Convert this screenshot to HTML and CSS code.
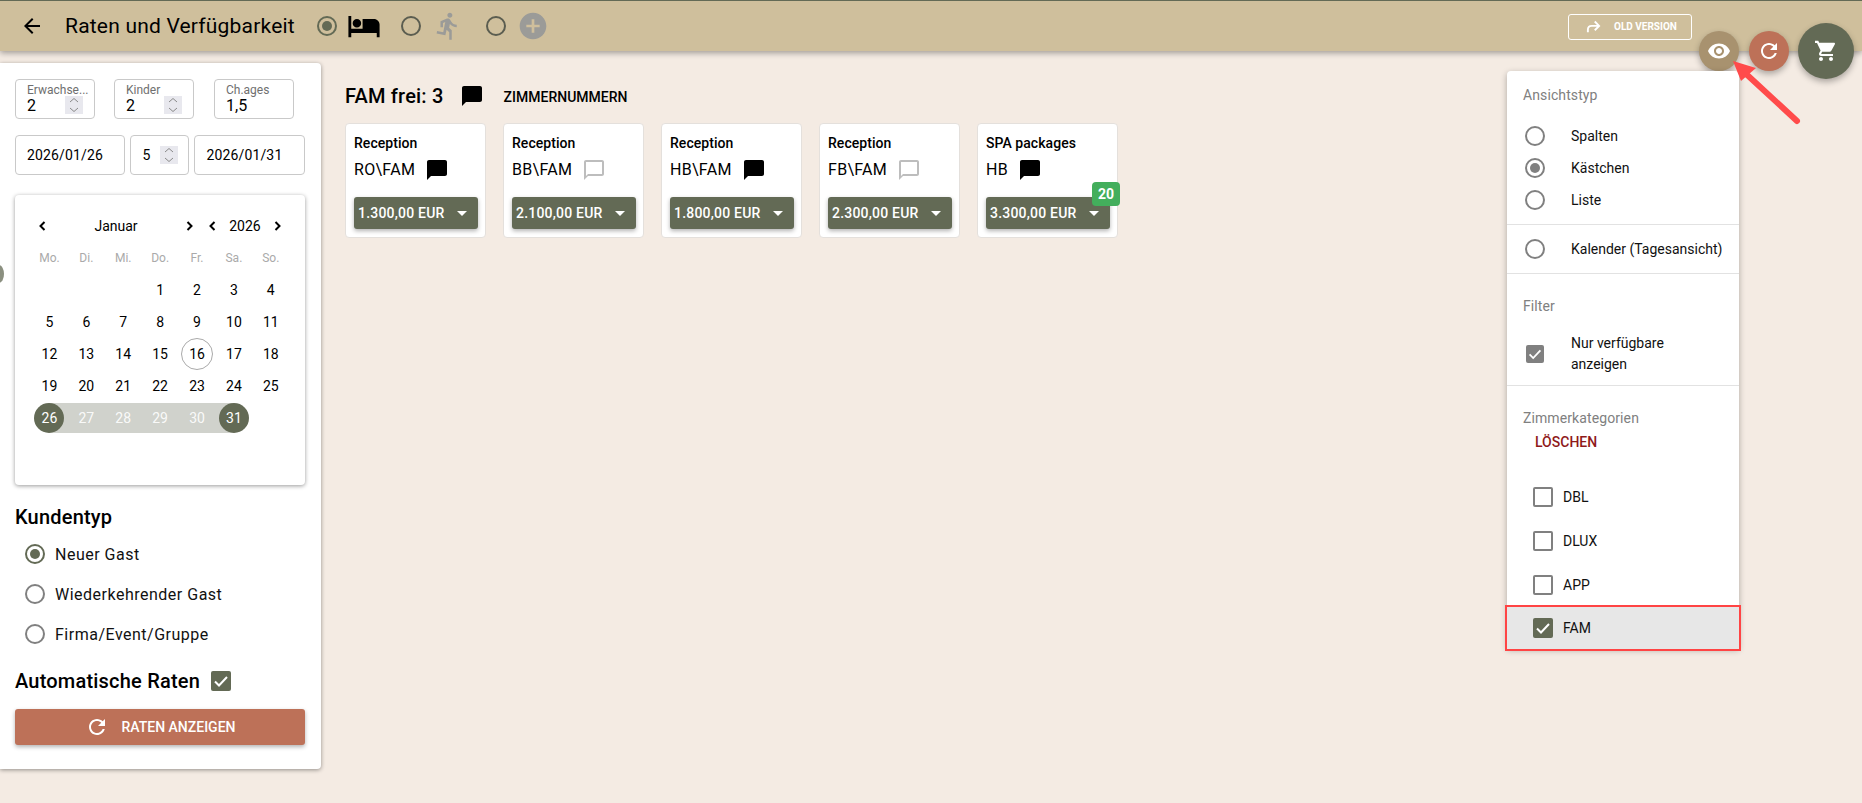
FILE: index.html
```html
<!DOCTYPE html>
<html lang="de">
<head>
<meta charset="utf-8">
<title>Raten und Verfügbarkeit</title>
<link rel="stylesheet" href="styles.css">
</head>
<body>
<header class="topbar">
  <svg class="ico back" viewBox="0 0 24 24"><path d="M20 11H7.83l5.59-5.59L12 4l-8 8 8 8 1.41-1.41L7.83 13H20v-2z"/></svg>
  <h1 class="title">Raten und Verfügbarkeit</h1>
  <span class="radio on olive mode-first"></span>
  <svg class="ico mode-ico" viewBox="0 0 24 24"><path d="M7 13c1.66 0 3-1.34 3-3S8.66 7 7 7s-3 1.34-3 3 1.34 3 3 3zm12-6h-8v7H3V5H1v15h2v-3h18v3h2v-9c0-2.21-1.79-4-4-4z"/></svg>
  <span class="radio dark mode-radio"></span>
  <svg class="ico mode-ico grey" viewBox="0 0 24 24"><path d="M13.49 5.48c1.1 0 2-.9 2-2s-.9-2-2-2-2 .9-2 2 .9 2 2 2zm-3.6 13.9l1-4.4 2.1 2v6h2v-7.5l-2.1-2 .6-3c1.3 1.5 3.3 2.5 5.5 2.5v-2c-1.9 0-3.5-1-4.3-2.4l-1-1.6c-.4-.6-1-1-1.7-1-.3 0-.5.1-.8.1l-5.2 2.2v4.7h2v-3.4l1.8-.7-1.6 8.1-4.9-1-.4 2 7 1.4z"/></svg>
  <span class="radio dark mode-radio"></span>
  <svg class="ico mode-plus grey" viewBox="0 0 24 24"><path d="M12 2C6.48 2 2 6.48 2 12s4.48 10 10 10 10-4.48 10-10S17.52 2 12 2zm5 11h-4v4h-2v-4H7v-2h4V7h2v4h4v2z"/></svg>
  <a class="old-version">
    <svg class="old-ico" viewBox="0 0 24 24"><path d="M3 21v-4c0-4 2-6 6-6h11M14 4l7 7-7 7" fill="none" stroke="#fff" stroke-width="3"/></svg>
    <span>OLD VERSION</span>
  </a>
</header>

<button class="fab fab-eye"><svg viewBox="0 0 24 24"><path d="M12 4.5C7 4.5 2.73 7.61 1 12c1.73 4.39 6 7.5 11 7.5s9.27-3.11 11-7.5c-1.73-4.39-6-7.5-11-7.5zM12 17c-2.76 0-5-2.24-5-5s2.24-5 5-5 5 2.24 5 5-2.24 5-5 5zm0-8c-1.66 0-3 1.34-3 3s1.34 3 3 3 3-1.34 3-3-1.34-3-3-3z"/></svg></button>
<button class="fab fab-refresh"><svg viewBox="0 0 24 24"><path d="M17.65 6.35C16.2 4.9 14.21 4 12 4c-4.42 0-7.99 3.58-7.99 8s3.57 8 7.99 8c3.73 0 6.84-2.55 7.73-6h-2.08c-.82 2.33-3.04 4-5.65 4-3.31 0-6-2.69-6-6s2.69-6 6-6c1.66 0 3.14.69 4.22 1.78L13 11h7V4l-2.35 2.35z"/></svg></button>
<button class="fab fab-cart"><svg viewBox="0 0 24 24"><path d="M7 18c-1.1 0-1.99.9-1.99 2S5.9 22 7 22s2-.9 2-2-.9-2-2-2zM1 2v2h2l3.6 7.59-1.35 2.45c-.16.28-.25.61-.25.96 0 1.1.9 2 2 2h12v-2H7.42c-.14 0-.25-.11-.25-.25l.03-.12.9-1.83h7.45c.75 0 1.41-.41 1.75-1.03l3.58-6.49c.08-.14.12-.31.12-.48 0-.55-.45-1-1-1H5.21l-.94-2H1zm16 16c-1.1 0-1.99.9-1.99 2s.89 2 1.99 2 2-.9 2-2-.9-2-2-2z"/></svg></button>

<div class="content">
  <aside class="sidebar">
    <span class="edge-dot"></span>
    <div class="field-row first">
      <div class="field w80"><label>Erwachse...</label><b>2</b><span class="spin labelled"><svg viewBox="0 0 18 18"><path d="M5 6l4-3.5L13 6M5 12l4 3.5 4-3.5"/></svg></span></div>
      <div class="field w80"><label>Kinder</label><b>2</b><span class="spin labelled"><svg viewBox="0 0 18 18"><path d="M5 6l4-3.5L13 6M5 12l4 3.5 4-3.5"/></svg></span></div>
      <div class="field w80 ages"><label>Ch.ages</label><b>1,5</b></div>
    </div>
    <div class="field-row second">
      <div class="field date d1">2026/01/26</div>
      <div class="field date d2">5<span class="spin"><svg viewBox="0 0 18 18"><path d="M5 6l4-3.5L13 6M5 12l4 3.5 4-3.5"/></svg></span></div>
      <div class="field date d3">2026/01/31</div>
    </div>

    <section class="calendar">
      <div class="cal-head">
        <svg class="chev" viewBox="0 0 10 14"><path d="M6.500 3L2.500 7l4 4"/></svg>
        <span class="month">Januar</span>
        <svg class="chev" viewBox="0 0 10 14"><path d="M3.500 3l4 4-4 4"/></svg>
        <svg class="chev c4" viewBox="0 0 10 14"><path d="M6.500 3L2.500 7l4 4"/></svg>
        <span class="year">2026</span>
        <svg class="chev" viewBox="0 0 10 14"><path d="M3.500 3l4 4-4 4"/></svg>
      </div>
      <div class="cal-grid weekdays">
        <span>Mo.</span><span>Di.</span><span>Mi.</span><span>Do.</span><span>Fr.</span><span>Sa.</span><span>So.</span>
      </div>
      <div class="cal-grid days">
        <i></i><i></i><i></i>
        <span>1</span><span>2</span><span>3</span><span>4</span>
        <span>5</span><span>6</span><span>7</span><span>8</span><span>9</span><span>10</span><span>11</span>
        <span>12</span><span>13</span><span>14</span><span>15</span><span><em class="today">16</em></span><span>17</span><span>18</span>
        <span>19</span><span>20</span><span>21</span><span>22</span><span>23</span><span>24</span><span>25</span>
        <span class="start"><em>26</em></span><span class="range">27</span><span class="range">28</span><span class="range">29</span><span class="range">30</span><span class="end"><em>31</em></span>
      </div>
    </section>

    <h2 class="side-h kunden">Kundentyp</h2>
    <div class="side-radio"><span class="radio on olive"></span>Neuer Gast</div>
    <div class="side-radio"><span class="radio"></span>Wiederkehrender Gast</div>
    <div class="side-radio"><span class="radio"></span>Firma/Event/Gruppe</div>
    <div class="auto">
      <h2 class="side-h">Automatische Raten</h2>
      <span class="check filled"><svg viewBox="0 0 20 20"><path d="M4 10.500l4 4 8-8.500"/></svg></span>
    </div>
    <button class="show-rates">
      <svg viewBox="0 0 24 24"><path d="M17.65 6.35C16.2 4.9 14.21 4 12 4c-4.42 0-7.99 3.58-7.99 8s3.57 8 7.99 8c3.73 0 6.84-2.55 7.73-6h-2.08c-.82 2.33-3.04 4-5.65 4-3.31 0-6-2.69-6-6s2.69-6 6-6c1.66 0 3.14.69 4.22 1.78L13 11h7V4l-2.35 2.35z"/></svg>
      RATEN ANZEIGEN
    </button>
  </aside>

  <main class="main">
    <div class="main-head">
      <span class="fam">FAM frei: 3</span>
      <svg class="ico chat" viewBox="0 0 24 24"><path d="M20 2H4c-1.100 0-2 .9-2 2v18l4-4h14c1.100 0 2-.9 2-2V4c0-1.100-.9-2-2-2z"/></svg>
      <span class="zimmer">ZIMMERNUMMERN</span>
    </div>
    <div class="cards">
      <article class="card">
        <div class="card-t">Reception</div>
        <div class="card-r">RO\FAM<svg class="ico chat" viewBox="0 0 24 24"><path d="M20 2H4c-1.100 0-2 .9-2 2v18l4-4h14c1.100 0 2-.9 2-2V4c0-1.100-.9-2-2-2z"/></svg></div>
        <button class="price">1.300,00 EUR<span class="caret"></span></button>
      </article>
      <article class="card">
        <div class="card-t">Reception</div>
        <div class="card-r">BB\FAM<svg class="ico chat light" viewBox="0 0 24 24"><path d="M20 2H4c-1.100 0-2 .9-2 2v18l4-4h14c1.100 0 2-.9 2-2V4c0-1.100-.9-2-2-2zm0 14H6l-2 2V4h16v12z"/></svg></div>
        <button class="price">2.100,00 EUR<span class="caret"></span></button>
      </article>
      <article class="card">
        <div class="card-t">Reception</div>
        <div class="card-r">HB\FAM<svg class="ico chat" viewBox="0 0 24 24"><path d="M20 2H4c-1.100 0-2 .9-2 2v18l4-4h14c1.100 0 2-.9 2-2V4c0-1.100-.9-2-2-2z"/></svg></div>
        <button class="price">1.800,00 EUR<span class="caret"></span></button>
      </article>
      <article class="card">
        <div class="card-t">Reception</div>
        <div class="card-r">FB\FAM<svg class="ico chat light" viewBox="0 0 24 24"><path d="M20 2H4c-1.100 0-2 .9-2 2v18l4-4h14c1.100 0 2-.9 2-2V4c0-1.100-.9-2-2-2zm0 14H6l-2 2V4h16v12z"/></svg></div>
        <button class="price">2.300,00 EUR<span class="caret"></span></button>
      </article>
      <article class="card">
        <div class="card-t">SPA packages</div>
        <div class="card-r">HB<svg class="ico chat" viewBox="0 0 24 24"><path d="M20 2H4c-1.100 0-2 .9-2 2v18l4-4h14c1.100 0 2-.9 2-2V4c0-1.100-.9-2-2-2z"/></svg></div>
        <button class="price">3.300,00 EUR<span class="caret"></span></button>
        <span class="badge">20</span>
      </article>
    </div>
  </main>
</div>

<div class="menu">
  <section class="m-sec view">
    <div class="m-h">Ansichtstyp</div>
    <div class="m-radio"><span class="radio grey-r"></span>Spalten</div>
    <div class="m-radio"><span class="radio grey-r on"></span>Kästchen</div>
    <div class="m-radio"><span class="radio grey-r"></span>Liste</div>
  </section>
  <section class="m-sec cal-sec">
    <div class="m-radio"><span class="radio grey-r"></span>Kalender (Tagesansicht)</div>
  </section>
  <section class="m-sec filter">
    <div class="m-h">Filter</div>
    <div class="m-check"><span class="check small"><svg viewBox="0 0 20 20"><path d="M4 10.500l4 4 8-8.500"/></svg></span><span class="m-check-t">Nur verfügbare<br>anzeigen</span></div>
  </section>
  <section class="m-sec cats">
    <div class="m-h">Zimmerkategorien</div>
    <div class="clear">LÖSCHEN</div>
    <div class="cat"><span class="check empty"></span>DBL</div>
    <div class="cat"><span class="check empty"></span>DLUX</div>
    <div class="cat"><span class="check empty"></span>APP</div>
    <div class="cat active"><span class="check filled"><svg viewBox="0 0 20 20"><path d="M4 10.500l4 4 8-8.500"/></svg></span>FAM</div>
  </section>
</div>

<svg class="annot-arrow" viewBox="0 0 80 80"><path d="M65 61L12 12" fill="none" stroke="#ff4b4b" stroke-width="6" stroke-linecap="round"/><path d="M1 1L24 8 9 21z" fill="#ff4b4b"/></svg>
</body>
</html>
```
FILE: styles.css
```css
* { box-sizing: border-box; }
html, body { margin: 0; height: 100%; overflow: hidden; }
body {
  position: relative;
  background: #f4ebe3;
  font-family: Roboto, "Liberation Sans", sans-serif;
  color: #000;
  font-size: 14px;
  display: flex;
  flex-direction: column;
}
button { font-family: inherit; border: 0; cursor: pointer; }
.ico { width: 24px; height: 24px; fill: #000; flex: none; display: block; }

/* top bar */
.topbar {
  height: 51px;
  flex: none;
  background: #cfbf9c;
  border-top: 1px solid #636a55;
  box-shadow: 0 2px 6px rgba(0,0,0,.35);
  display: flex;
  align-items: center;
  padding: 0 170px 0 20px;
  position: relative;
  z-index: 2;
}
.back { margin-right: 21px; }
.title { margin: 0 22px 0 0; font-size: 21px; font-weight: 400; letter-spacing: .2px; white-space: nowrap; }
.mode-first { margin-right: 10px; }
.mode-ico { width: 34px; height: 34px; margin-right: 20px; }
.mode-ico.grey { width: 30px; height: 30px; margin: 0 23px 0 12px; }
.mode-radio { flex: none; }
.mode-plus { width: 32px; height: 32px; margin-left: 11px; }
.grey { fill: #9b9b98; }
.old-version {
  margin-left: auto;
  width: 124px; height: 26px;
  border: 1px solid #fff;
  border-radius: 3px;
  display: flex; align-items: center;
  padding-left: 17px;
  color: #fff;
  font-size: 10px; font-weight: 700;
  margin-top: 1px;
}
.old-ico { width: 15px; height: 15px; margin-right: 13px; }

/* radio / check */
.radio {
  display: inline-block;
  width: 20px; height: 20px; flex: none;
  border: 2px solid #808080;
  border-radius: 50%;
  position: relative;
}
.radio.dark { border-color: #5b5d50; }
.radio.on::after {
  content: ""; position: absolute; inset: 3px; border-radius: 50%; background: #808080;
}
.radio.on.olive { border-color: #636a55; }
.radio.on.olive::after { background: #636a55; }
.check { display: inline-flex; flex: none; width: 20px; height: 20px; border-radius: 2px; align-items: center; justify-content: center; }
.check svg { width: 20px; height: 20px; fill: none; stroke: #fff; stroke-width: 2; }
.check.filled { background: #636a55; }
.check.small { width: 18px; height: 18px; background: #808080; }
.check.small svg { width: 18px; height: 18px; }
.check.empty { border: 2px solid #808080; }

/* floating buttons */
.fab {
  position: absolute; z-index: 3; padding: 0; border-radius: 50%;
  display: flex; align-items: center; justify-content: center;
  box-shadow: 0 3px 6px rgba(0,0,0,.3);
}
.fab svg { fill: #fff; width: 24px; height: 24px; }
.fab-eye { left: 1699px; top: 31px; width: 40px; height: 40px; background: #a8926f; }
.fab-refresh { left: 1749px; top: 31px; width: 40px; height: 40px; background: #bd7158; }
.fab-cart { left: 1798px; top: 23px; width: 56px; height: 56px; background: #636a55; }

/* layout */
.content { flex: 1; display: flex; align-items: flex-start; min-height: 0; }
.sidebar {
  width: 321px; height: 706px; flex: none;
  margin-top: 12px;
  background: #fff;
  border-radius: 0 4px 4px 0;
  box-shadow: 0 1px 4px rgba(0,0,0,.4);
  padding: 16px 16px 0 15px;
  position: relative;
}
.edge-dot {
  position: absolute; left: -6px; top: 202px;
  width: 10px; height: 18px; border-radius: 50%;
  background: #8b9080;
}
.field-row { display: flex; }
.field-row.first { gap: 19px; margin-bottom: 16px; }
.field-row.second { gap: 5px; margin-bottom: 20px; }
.field {
  height: 40px;
  border: 1px solid #c9c9c9;
  border-radius: 4px;
  position: relative;
  padding: 3px 0 0 11px;
  line-height: 1;
}
.w80 { width: 80px; }
.ages { margin-left: 1px; }
.field label { display: block; font-size: 12px; color: #6f6f6f; height: 14px; line-height: 14px; white-space: nowrap; }
.field b { display: block; font-weight: 400; font-size: 16px; line-height: 18px; }
.date { display: flex; align-items: center; padding: 0 0 0 11px; font-size: 14px; letter-spacing: .15px; }
.d1 { width: 110px; }
.d2 { width: 60px; padding-left: 12px; }
.d3 { width: 111px; }
.spin {
  position: absolute; top: 16px; left: 49px;
  width: 18px; height: 18px;
  background: #e8e8ee;
  display: block;
}
.spin svg { width: 18px; height: 18px; display: block; fill: none; stroke: #8a8a8a; stroke-width: 1; }
.d2 .spin { top: 10px; left: 29px; }

/* calendar */
.calendar {
  width: 290px; height: 290px;
  border-radius: 4px;
  box-shadow: 0 1px 4px rgba(0,0,0,.4);
  padding: 24px 16px 0;
}
.cal-head { display: flex; align-items: center; height: 14px; padding-left: 7px; }
.chev { width: 10px; height: 14px; fill: none; stroke: #000; stroke-width: 2; flex: none; }
.month { width: 136px; text-align: center; }
.c4 { margin-left: 14px; }
.year { width: 54px; text-align: center; }
.cal-grid { display: grid; grid-template-columns: repeat(7, 36.9px); margin-left: 0; }
.weekdays { margin-top: 18px; margin-bottom: 9px; font-size: 12px; color: #aaa; line-height: 14px; text-align: center; }
.days { grid-auto-rows: 32px; margin-left: 0; }
.days span {
  height: 30px; margin: 1px 0;
  display: flex; align-items: center; justify-content: center;
}
.days em { font-style: normal; display: flex; align-items: center; justify-content: center; border-radius: 50%; }
.today { width: 32px; height: 32px; border: 1px solid #aaa; }
.days .range { background: #d0d2cc; color: rgba(255,255,255,.9); }
.start, .end { color: #fff; }
.start { background: linear-gradient(to right, transparent 50%, #d0d2cc 50%); }
.end { background: linear-gradient(to left, transparent 50%, #d0d2cc 50%); }
.start em, .end em { width: 30px; height: 30px; background: #636a55; }

/* sidebar lower */
.side-h { margin: 0; font-size: 20px; font-weight: 500; line-height: 24px; letter-spacing: .2px; }
.kunden { margin: 20px 0 5px; }
.side-radio {
  display: flex; align-items: center; height: 40px;
  padding-left: 10px; gap: 10px;
  font-size: 16px; letter-spacing: .5px; color: #111;
}
.auto { display: flex; align-items: center; gap: 11px; margin: 15px 0 16px; height: 24px; }
.show-rates {
  width: 290px; height: 36px;
  background: #bd7158;
  border-radius: 3px;
  color: #fff; font-weight: 500; font-size: 14px;
  box-shadow: 0 2px 4px rgba(0,0,0,.3);
  display: flex; align-items: center; justify-content: center; gap: 13px;
}
.show-rates svg { width: 24px; height: 24px; fill: #fff; }

/* main */
.main { flex: 1; padding: 31px 0 0 24px; }
.main-head { display: flex; align-items: center; height: 28px; }
.fam { font-size: 20px; font-weight: 500; letter-spacing: .2px; }
.main-head .chat { margin-left: 16px; }
.zimmer { margin-left: 20px; font-size: 14px; font-weight: 500; margin-top: 2px; }
.cards { display: flex; gap: 17px; margin-top: 13px; }
.card {
  width: 141px; height: 115px;
  background: #fff;
  border: 1px solid #e4e0dc;
  border-radius: 4px;
  padding: 11px 8px 0;
  position: relative;
}
.card-t { font-size: 14px; font-weight: 500; line-height: 16px; letter-spacing: .05px; }
.card-r { display: flex; align-items: center; font-size: 16px; height: 24px; margin-top: 6px; gap: 10px; letter-spacing: .3px; }
.card-r .chat { margin-top: 1px; }
.chat.light { fill: #bdbdbd; }
.price {
  width: 124px; height: 32px;
  margin-top: 16px;
  background: #636a55;
  color: #fff; font-size: 14px; font-weight: 500; letter-spacing: .2px;
  border-radius: 3px;
  box-shadow: 0 2px 4px rgba(0,0,0,.3);
  display: flex; align-items: center; justify-content: space-between;
  padding: 0 11px 0 4px;
}
.caret { width: 0; height: 0; border: 5px solid transparent; border-top-color: #fff; border-bottom-width: 0; }
.badge {
  position: absolute; left: 114px; top: 58px;
  width: 28px; height: 24px;
  background: #43ae5c;
  border-radius: 4px;
  color: #fff; font-weight: 700; font-size: 14px;
  display: flex; align-items: center; justify-content: center;
}

/* view menu */
.menu {
  position: absolute; z-index: 4;
  left: 1507px; top: 71px;
  width: 232px; height: 577px;
  background: #fff;
  border-radius: 4px 4px 0 0;
  box-shadow: 0 2px 6px rgba(0,0,0,.3);
  color: #111;
}
.m-sec { border-bottom: 1px solid #e2e2e2; }
.m-sec:last-child { border-bottom: 0; }
.m-h { padding-left: 16px; color: #808080; font-size: 14px; line-height: 16px; letter-spacing: .1px; }
.view { height: 154px; padding-top: 16px; }
.view .m-h { margin-bottom: 17px; }
.cal-sec { height: 49px; display: flex; align-items: center; }
.m-radio { height: 32px; display: flex; align-items: center; padding-left: 18px; gap: 26px; }
.filter { height: 112px; padding-top: 24px; }
.m-check { display: flex; align-items: center; padding-left: 19px; gap: 27px; margin-top: 19px; line-height: 21px; }
.m-check-t { display: block; }
.cats { padding-top: 24px; }
.clear { color: #8f1a1a; font-weight: 500; padding-left: 28px; margin-top: 8px; line-height: 16px; margin-bottom: 25px; }
.cat { height: 44px; display: flex; align-items: center; padding-left: 26px; gap: 10px; }
.cat.active {
  background: #e7e7e7;
  outline: 2px solid #ff4444;
  height: 42px;
}

.annot-arrow { position: absolute; z-index: 5; left: 1732px; top: 60px; width: 80px; height: 80px; }
```
